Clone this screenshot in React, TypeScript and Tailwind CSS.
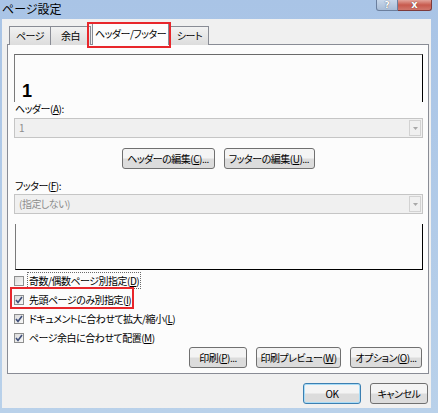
import React from 'react';

const font = "font-['Noto_Sans_CJK_JP','Noto_Sans',sans-serif] [font-feature-settings:'palt']";
const txt = 'text-[10px] tracking-[-0.5px] whitespace-nowrap';

const Key = ({ k }: { k: string }) => (
  <>
    (<u className="underline-offset-[1px]">{k}</u>)
  </>
);

const Btn = ({ children, w, focus }: { children: React.ReactNode; w: string; focus?: boolean }) => (
  <div
    className={`${w} h-[21px] flex items-center justify-center rounded-[3px] border ${
      focus ? 'border-[#3c7fb1] shadow-[inset_0_0_0_1px_#a8dcf7]' : 'border-[#707070]'
    } bg-linear-to-b from-[#f4f4f4] from-45% to-[#dcdcdc] to-55% ${txt} text-black leading-none`}
  >
    {children}
  </div>
);

const Combo = ({ value }: { value: string }) => (
  <div className="ml-[6px] w-[409px] h-[20px] flex items-center border border-[#c5c5c5] bg-[#f0f0f0]">
    <span className={`pl-[4px] ${txt} text-[#8d8d8d] leading-none`}>{value}</span>
    <div className="ml-auto mr-[1px] w-[12px] h-[16px] border border-[#d2d2d2] flex items-center justify-center">
      <svg width="5" height="3" viewBox="0 0 5 3">
        <path d="M0 0h5L2.5 3z" fill="#a8a8a8" />
      </svg>
    </div>
  </div>
);

const Check = ({ on }: { on: boolean }) => (
  <div className="w-[10px] h-[10px] border border-[#8e8f8f] bg-linear-to-br from-[#dcdcdc] to-[#f8f8f8] flex items-center justify-center">
    {on && (
      <svg width="8" height="8" viewBox="0 0 8 8">
        <path d="M1 4l2 2.5L7 1" fill="none" stroke="#3f4f7a" strokeWidth="1.6" />
      </svg>
    )}
  </div>
);

const CheckRow = ({ on, children, focus }: { on: boolean; children: React.ReactNode; focus?: boolean }) => (
  <div className="h-[19px] flex items-center pl-[6px]">
    <Check on={on} />
    <span
      className={`ml-[3px] px-[1px] ${txt} leading-[15px] ${
        focus ? 'border border-dotted border-[#6a6a6a]' : 'border border-transparent'
      }`}
    >
      {children}
    </span>
  </div>
);

const Tab = ({ label, w }: { label: string; w: string }) => (
  <div
    className={`${w} h-[19px] flex items-center justify-center border border-b-0 border-[#898c95] bg-linear-to-b from-[#f2f2f2] to-[#dcdcdc] ${txt} leading-none`}
  >
    {label}
  </div>
);

export default function App() {
  return (
    <div className={`w-[438px] h-[413px] overflow-hidden bg-linear-to-b from-[#a9c4e6] to-[#b9d1ea] flex flex-col ${font} text-black`}>
      {/* title bar */}
      <div className="h-[19px] flex items-start shrink-0">
        <span className="pl-[2px] pt-[2px] text-[12px] leading-[14px] text-black whitespace-nowrap">ページ設定</span>
        <div className="ml-auto mr-[6px] flex">
          <div className="w-[22px] h-[11px] rounded-bl-[3px] border border-t-0 border-[#6b7f9e] bg-linear-to-b from-[#c8d7ea] to-[#a8bcd6] flex items-center justify-center">
            <span className="text-[9px] leading-none font-bold text-white font-['DejaVu_Sans'] [text-shadow:0_0_1px_#334]">?</span>
          </div>
          <div className="w-[34px] h-[11px] rounded-br-[3px] border border-t-0 border-l-0 border-[#7d3a3a] bg-linear-to-b from-[#e2a49b] via-[#c75a4e] to-[#d0766b] flex items-center justify-center">
            <span className="text-[10px] leading-none font-bold text-white font-['DejaVu_Sans'] [text-shadow:0_0_1px_#422]">x</span>
          </div>
        </div>
      </div>

      {/* client area */}
      <div className="ml-[2px] mr-[7px] mb-[5px] flex-1 bg-[#f0f0f0] pl-[5px] pr-[2px] pt-[3px] flex flex-col">
        {/* tabs */}
        <div className="relative flex items-end h-[23px] -mb-px pl-[2px]">
          <Tab label="ページ" w="w-[42px]" />
          <div className="-ml-px">
            <Tab label="余白" w="w-[41px]" />
          </div>
          <div className={`ml-[1px] w-[77px] h-[23px] relative z-10 border border-b-0 border-[#898c95] bg-[#fcfcfc] flex items-center justify-center ${txt} leading-none`}>
            ヘッダー/フッター
          </div>
          <div className="ml-[1px]">
            <Tab label="シート" w="w-[39px]" />
          </div>
          <div className="absolute left-[80px] top-0 w-[84px] h-[26px] border-2 border-[#e8262b] z-20" />
        </div>

        {/* panel */}
        <div className="w-[422px] h-[330px] border border-[#898c95] bg-[#fcfcfc] flex flex-col">
          {/* header preview */}
          <div className="ml-[6px] mt-[9px] w-[409px] h-[48px] border-t border-l border-r border-t-[#6a6a6a] border-l-[#7a7a7a] border-r-black pl-[7px] pt-[23px]">
            <span className="font-['Liberation_Sans'] font-bold text-[18px] leading-none">1</span>
          </div>
          <div className={`ml-[7px] h-[16px] ${txt} leading-[14px]`}>
            ヘッダー<Key k="A" />:
          </div>
          <Combo value="1" />
          <div className="mt-[10px] flex justify-center gap-[9px]">
            <Btn w="w-[93px]">
              ヘッダーの編集<Key k="C" />...
            </Btn>
            <Btn w="w-[91px]">
              フッターの編集<Key k="U" />...
            </Btn>
          </div>
          <div className={`ml-[7px] mt-[9px] h-[16px] ${txt} leading-[16px]`}>
            フッター<Key k="F" />:
          </div>
          <Combo value="(指定しない)" />
          {/* footer preview */}
          <div className="ml-[7px] mt-[10px] w-[408px] h-[46px] border-l border-r border-b border-l-[#7a7a7a] border-r-black border-b-black" />

          <div className="mt-[1px] relative">
            <CheckRow on={false} focus>
              奇数/偶数ページ別指定<Key k="D" />
            </CheckRow>
            <CheckRow on>
              先頭ページのみ別指定<Key k="I" />
            </CheckRow>
            <CheckRow on>
              ドキュメントに合わせて拡大/縮小<Key k="L" />
            </CheckRow>
            <CheckRow on>
              ページ余白に合わせて配置<Key k="M" />
            </CheckRow>
            <div className="absolute left-[2px] top-[16px] w-[124px] h-[22px] border-2 border-[#e8262b]" />
          </div>

          <div className="flex justify-end gap-[9px] pr-[6px]">
            <Btn w="w-[58px]">
              印刷<Key k="P" />...
            </Btn>
            <Btn w="w-[85px]">
              印刷プレビュー<Key k="W" />
            </Btn>
            <Btn w="w-[72px]">
              オプション<Key k="O" />...
            </Btn>
          </div>
        </div>

        {/* bottom buttons */}
        <div className="mt-[9px] flex justify-end gap-[9px] pr-[1px]">
          <Btn w="w-[58px]" focus>
            OK
          </Btn>
          <Btn w="w-[58px]">キャンセル</Btn>
        </div>
      </div>
    </div>
  );
}
